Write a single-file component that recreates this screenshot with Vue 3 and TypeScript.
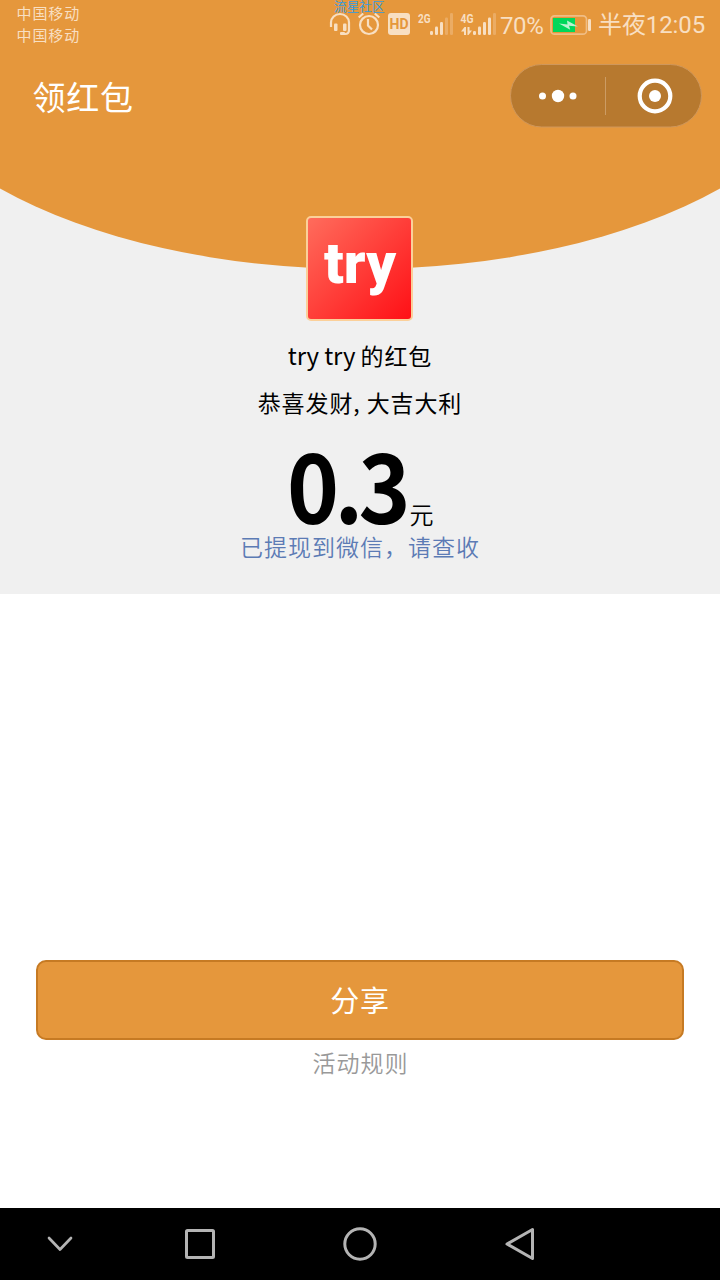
<script setup lang="ts">
interface SignalBar {
  x: number
  top: number
  dim: boolean
}

const carriers: string[] = ['中国移动', '中国移动']

const signal2g: SignalBar[] = [
  { x: 0, top: 18, dim: false },
  { x: 5, top: 13.5, dim: false },
  { x: 10, top: 9, dim: false },
  { x: 15, top: 4.5, dim: true },
  { x: 20, top: 0, dim: true },
]

const signal4g: SignalBar[] = [
  { x: 0, top: 18, dim: false },
  { x: 5, top: 13.5, dim: false },
  { x: 10, top: 9, dim: false },
  { x: 15, top: 4.5, dim: false },
  { x: 20, top: 0, dim: true },
]
</script>

<template>
  <div class="screen">
    <section class="hero">
      <svg class="arc" width="720" height="270" viewBox="0 0 720 270">
        <path d="M0 0H720V188.5A480 238 0 0 1 0 188.5Z" fill="#e5973c" />
      </svg>

      <header class="status">
        <div class="carriers">
          <span v-for="(name, i) in carriers" :key="i">{{ name }}</span>
        </div>
        <span class="community">流星社区</span>
        <svg class="indicators" width="180" height="40" viewBox="320 0 180 40">
          <g fill="none" stroke="#f8dfc2" stroke-width="2.200">
            <path d="M331 27V22.500a9 8.500 0 0 1 18 0V30q0 4-4 4h-3" />
            <circle cx="369" cy="25" r="9" />
            <path d="M368 19v6.500l4 4M358.700 17.500l4.500-4M374.800 13.500l4.500 4" />
          </g>
          <g fill="#f8dfc2">
            <rect x="334" y="23.500" width="3.500" height="7.500" rx="1" />
            <rect x="343" y="23.500" width="3.500" height="7.500" rx="1" />
            <rect x="340" y="32" width="5" height="3" rx="1" />
            <rect x="388" y="13" width="22" height="22" rx="3" />
          </g>
          <text class="hd" x="389.500" y="29" textLength="19" lengthAdjust="spacingAndGlyphs">HD</text>
          <text class="net" x="418" y="22.500" textLength="12.500" lengthAdjust="spacingAndGlyphs">2G</text>
          <text class="net" x="460.500" y="22.500" textLength="13" lengthAdjust="spacingAndGlyphs">4G</text>
          <g fill="#f8dfc2">
            <g transform="translate(430 13)">
              <rect v-for="b in signal2g" :key="b.x" :x="b.x" :y="b.top" width="3" :height="22 - b.top" rx="1.300" :opacity="b.dim ? 0.3 : 1" />
            </g>
            <g transform="translate(473 13)">
              <rect v-for="b in signal4g" :key="b.x" :x="b.x" :y="b.top" width="3" :height="22 - b.top" rx="1.300" :opacity="b.dim ? 0.3 : 1" />
            </g>
            <path d="M461 31.500l3.500-4.500h1.500v8h-2v-3.500zM467.500 27h2v3.500h2.500l-3.500 4.500h-1z" />
          </g>
        </svg>
        <span class="percent">70%</span>
        <svg class="battery" width="42" height="22" viewBox="0 0 42 22">
          <rect x="1" y="1.800" width="35.500" height="18.400" rx="3.500" fill="none" stroke="#f0bd84" stroke-width="1.700" />
          <rect x="3" y="4" width="22" height="14" fill="#00d75a" />
          <path d="M9 9.500l8.500 1-.5-4 11 6-9-.8 1.200 4z" fill="#b9f3cf" />
          <rect x="38" y="5" width="3" height="12" rx="1.200" fill="#f8dfc2" />
        </svg>
        <span class="clock">半夜12:05</span>
      </header>

      <div class="titlebar">
        <h1>领红包</h1>
        <svg class="capsule" width="192" height="64" viewBox="0 0 192 64">
          <rect x=".5" y=".5" width="191" height="62.500" rx="31.200" fill="#b7792f" stroke="#cf975b" />
          <g fill="#fff">
            <circle cx="32.500" cy="32" r="3.500" />
            <circle cx="48" cy="32" r="6.200" />
            <circle cx="63" cy="32" r="3.500" />
            <circle cx="145" cy="32" r="6" />
          </g>
          <circle cx="145" cy="32" r="15.300" fill="none" stroke="#fff" stroke-width="4.200" />
          <path d="M95.500 13V51" stroke="#cc9c64" stroke-width="1" />
        </svg>
      </div>

      <div class="avatar">
        <svg width="103" height="101" viewBox="0 0 103 101">
          <text class="logo" x="16" y="65" textLength="72" lengthAdjust="spacingAndGlyphs">try</text>
        </svg>
      </div>
      <p class="sender"><span class="nick">try try </span>的红包</p>
      <p class="wish">恭喜发财, 大吉大利</p>
      <div class="amount">
        <svg width="123" height="104" viewBox="0 0 123 104">
          <text class="figure" x="0" y="97" transform="scale(0.92 1)">0.3</text>
        </svg>
        <span>元</span>
      </div>
      <p class="notice">已提现到微信，请查收</p>
    </section>

    <main class="actions">
      <button class="share" type="button">分享</button>
      <a class="rules">活动规则</a>
    </main>

    <nav class="navbar">
      <svg width="720" height="72" viewBox="0 0 720 72" fill="none" stroke="#b4b4b4" stroke-width="3" stroke-linecap="round" stroke-linejoin="round">
        <path d="M49 30l11 11.500L71 30" stroke-width="2.700" />
        <rect x="186.500" y="22.500" width="27" height="27" rx="1" />
        <circle cx="360" cy="36" r="15.200" />
        <path d="M532.500 21.500V50.500L507 36Z" />
      </svg>
    </nav>
  </div>
</template>

<style>
body {
  margin: 0;
}
</style>

<style scoped>
.screen {
  width: 720px;
  height: 1280px;
  display: flex;
  flex-direction: column;
  overflow: hidden;
  background: #fff;
  font-family: "Noto Sans CJK SC", sans-serif;
  font-weight: 350;
}

p,
h1 {
  margin: 0;
  font-weight: 350;
}

.hero {
  position: relative;
  height: 594px;
  background: #f0f0f0;
  display: flex;
  flex-direction: column;
  align-items: center;
}

.arc {
  position: absolute;
  top: 0;
  left: 0;
}

.status {
  position: relative;
  width: 720px;
  height: 50px;
  display: flex;
  color: #f8dfc2;
  white-space: nowrap;
}

.carriers {
  width: 303.5px;
  padding: 2px 0 0 16.5px;
  display: flex;
  flex-direction: column;
  font-size: 15px;
  letter-spacing: 0.9px;
  line-height: 22px;
  font-weight: 400;
}

.community {
  position: absolute;
  left: 334px;
  top: -1px;
  font-size: 12.7px;
  line-height: 13px;
  color: #309be0;
}

.indicators {
  flex: none;
}

.hd {
  font: 700 14px Roboto, sans-serif;
  fill: #e5973c;
}

.net {
  font: 700 13px Roboto, sans-serif;
  fill: #f8dfc2;
}

.percent {
  width: 50px;
  font: 400 24px/52px Roboto, sans-serif;
  letter-spacing: -0.4px;
}

.battery {
  flex: none;
  margin-top: 14px;
}

.clock {
  margin-left: 6px;
  font: 400 24px/50px Roboto, "Noto Sans CJK SC", sans-serif;
  letter-spacing: -0.1px;
}

.titlebar {
  position: relative;
  width: 720px;
  height: 92px;
  display: flex;
  justify-content: space-between;
  box-sizing: border-box;
  padding: 14px 18.5px 0 32.5px;
}

.titlebar h1 {
  font-size: 33px;
  letter-spacing: 0.7px;
  line-height: 64px;
  font-weight: 400;
  color: #fff;
}

.avatar {
  position: relative;
  flex: none;
  width: 103px;
  height: 101px;
  margin: 74px 1px 0 0;
  border: 2px solid #fbd09a;
  border-radius: 5px;
  background: linear-gradient(135deg, #ff6c5c, #ff1016);
}

.avatar svg {
  display: block;
}

.logo {
  font: 900 57px Roboto, sans-serif;
  fill: #fff;
}

.sender,
.wish {
  height: 48px;
  font-size: 23px;
  letter-spacing: 0.9px;
  line-height: 47px;
  font-weight: 400;
  color: #000;
}

.sender {
  margin-top: 10px;
}

.nick {
  font-size: 24px;
  letter-spacing: -0.15px;
  white-space: pre;
}

.amount {
  height: 104px;
  display: flex;
}

.amount svg {
  overflow: visible;
}

.figure {
  font-size: 96px;
  font-weight: 700;
  letter-spacing: -5px;
}

.amount span {
  padding-top: 69px;
  font-size: 24px;
  line-height: 36px;
}

.notice {
  margin-top: -3px;
  font-size: 23px;
  letter-spacing: 1px;
  line-height: 36px;
  color: #5c7bb5;
}

.actions {
  height: 614px;
  display: flex;
  flex-direction: column;
  align-items: center;
  padding-top: 366px;
  box-sizing: border-box;
}

.share {
  width: 648px;
  height: 80px;
  padding: 0 0 3px;
  border: 2px solid #c67a23;
  border-radius: 10px;
  background: #e5973c;
  color: #fff;
  font-family: inherit;
  font-weight: 400;
  font-size: 29px;
  letter-spacing: 0.8px;
}

.rules {
  margin: 4px 0 0 1px;
  font-size: 23px;
  letter-spacing: 1px;
  line-height: 36px;
  color: #999;
}

.navbar {
  height: 72px;
  background: #000;
}
</style>
